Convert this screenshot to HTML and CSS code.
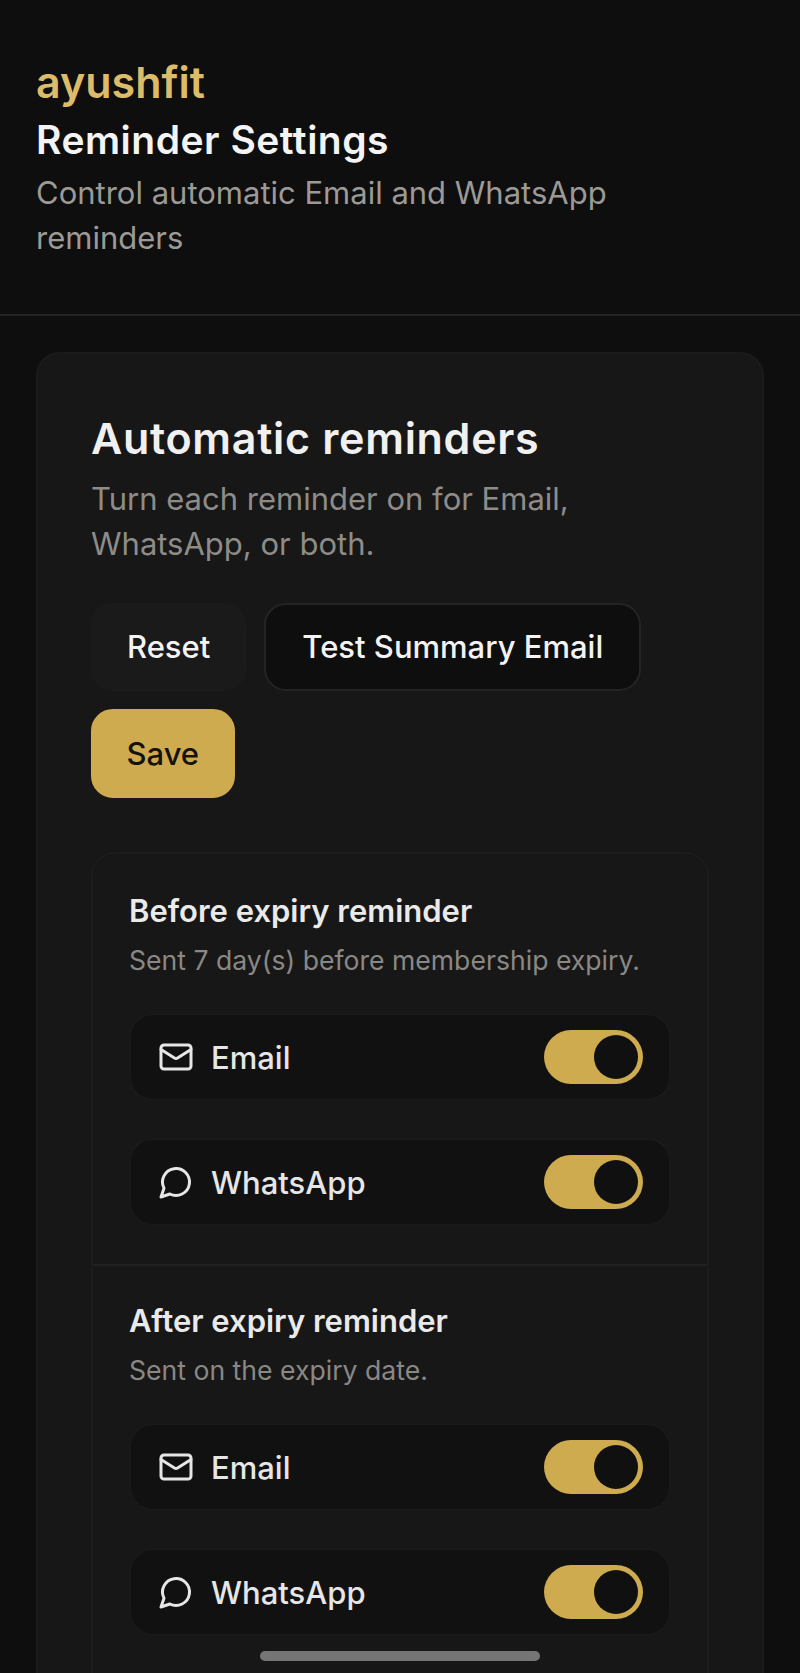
FILE: index.html
```html
<!DOCTYPE html>
<html lang="en">
<head>
<meta charset="utf-8">
<title>Reminder Settings</title>
<link rel="stylesheet" href="styles.css">
</head>
<body>
<div class="screen">
  <header class="top">
    <div class="brand">ayushfit</div>
    <h1 class="title">Reminder Settings</h1>
    <p class="subtitle">Control automatic Email and WhatsApp reminders</p>
  </header>
  <main class="content">
    <section class="card">
      <h2 class="card-title">Automatic reminders</h2>
      <p class="card-sub">Turn each reminder on for Email, WhatsApp, or both.</p>
      <div class="actions">
        <button class="btn btn-ghost">Reset</button>
        <button class="btn btn-dark">Test Summary Email</button>
        <button class="btn btn-gold">Save</button>
      </div>
      <div class="panel">
        <div class="group">
          <h3 class="group-title">Before expiry reminder</h3>
          <p class="group-sub">Sent 7 day(s) before membership expiry.</p>
          <div class="rows">
            <div class="row">
              <span class="row-label">
                <svg class="icon" viewBox="0 0 24 24"><rect x="2" y="4" width="20" height="16" rx="2"/><path d="M22 7l-8.97 5.7a1.94 1.94 0 0 1-2.06 0L2 7"/></svg>
                Email
              </span>
              <span class="toggle"><span class="knob"></span></span>
            </div>
            <div class="row">
              <span class="row-label">
                <svg class="icon" viewBox="0 0 24 24"><path d="M7.9 20A9 9 0 1 0 4 16.1L2 22Z"/></svg>
                WhatsApp
              </span>
              <span class="toggle"><span class="knob"></span></span>
            </div>
          </div>
        </div>
        <div class="group group-next">
          <h3 class="group-title">After expiry reminder</h3>
          <p class="group-sub">Sent on the expiry date.</p>
          <div class="rows">
            <div class="row">
              <span class="row-label">
                <svg class="icon" viewBox="0 0 24 24"><rect x="2" y="4" width="20" height="16" rx="2"/><path d="M22 7l-8.97 5.7a1.94 1.94 0 0 1-2.06 0L2 7"/></svg>
                Email
              </span>
              <span class="toggle"><span class="knob"></span></span>
            </div>
            <div class="row">
              <span class="row-label">
                <svg class="icon" viewBox="0 0 24 24"><path d="M7.9 20A9 9 0 1 0 4 16.1L2 22Z"/></svg>
                WhatsApp
              </span>
              <span class="toggle"><span class="knob"></span></span>
            </div>
          </div>
        </div>
      </div>
    </section>
  </main>
  <div class="home-bar"></div>
</div>
</body>
</html>
```

FILE: styles.css
```css
* { box-sizing: border-box; }
html, body { margin: 0; padding: 0; background: #0e0e0e; }
body { font-family: Inter, "Liberation Sans", sans-serif; color: #f0f0f0; }
h1, h2, h3, p { margin: 0; }

.screen { position: relative; height: 100vh; overflow: hidden; background: #0e0e0e; }

.top { padding: 60px 120px 0 36px; border-bottom: 2px solid #232323; height: 316px; }
.brand { font-size: 43px; line-height: 44px; font-weight: 600; color: #dcbb69; }
.title { font-size: 39px; line-height: 48px; font-weight: 600; letter-spacing: 0.5px; color: #f4f4f4; margin-top: 12px; white-space: nowrap; }
.subtitle { font-size: 31px; line-height: 45px; color: #9c9a96; margin-top: 6px; }

.content { padding: 36px 36px 0; }
.card { background: #171717; border: 2px solid #1b1b1b; border-radius: 24px; padding: 56px 53px 80px; }
.card-title { font-size: 43px; line-height: 56px; font-weight: 600; letter-spacing: 0.7px; color: #f0f0f0; }
.card-sub { font-size: 31px; line-height: 45px; color: #8e8c88; margin-top: 10px; }

.actions { display: flex; flex-wrap: wrap; gap: 18px; margin-top: 37px; }
.btn { height: 88px; padding-bottom: 2px; border-radius: 22px; font: 500 31px Inter, "Liberation Sans", sans-serif; border: 2px solid transparent; }
.btn-ghost { padding-left: 34px; padding-right: 34px; background: #1a1a1a; color: #f3f3f3; border-color: #1b1b1b; }
.btn-dark { padding-left: 36px; padding-right: 36px; background: #0e0e0e; color: #f3f3f3; border-color: #242424; }
.btn-gold { height: 89px; padding-left: 33.5px; padding-right: 33.5px; background: #cfab50; color: #161208; border-color: #cfab50; }

.panel { margin-top: 54px; border: 2px solid #1c1c1c; border-radius: 24px 24px 0 0; }
.group { padding: 37px 36px 38px; }
.group-next { padding-top: 35px; border-top: 2px solid #202020; }
.group-title { font-size: 31px; line-height: 40px; font-weight: 600; color: #eaeaea; }
.group-sub { font-size: 26.6px; line-height: 38px; color: #8a8885; margin-top: 10px; }

.rows { display: flex; flex-direction: column; gap: 37px; margin-top: 34px; }
.row { display: flex; align-items: center; justify-content: space-between; height: 88px; padding: 0 26px 0 27px; background: #111; border: 2px solid #191919; border-radius: 24px; }
.row-label { display: flex; align-items: center; gap: 17px; font-size: 31px; font-weight: 500; color: #e6e6e6; }
.icon { width: 36px; height: 36px; fill: none; stroke: #e6e6e6; stroke-width: 2; stroke-linecap: round; stroke-linejoin: round; }

.toggle { display: flex; align-items: center; justify-content: flex-end; width: 99px; height: 54px; padding: 0 5px; border-radius: 27px; background: #cfab50; }
.knob { width: 44px; height: 44px; border-radius: 50%; background: #101010; }

.home-bar { position: absolute; left: 260px; bottom: 12px; width: 280px; height: 10px; border-radius: 5px; background: #757575; }
```
